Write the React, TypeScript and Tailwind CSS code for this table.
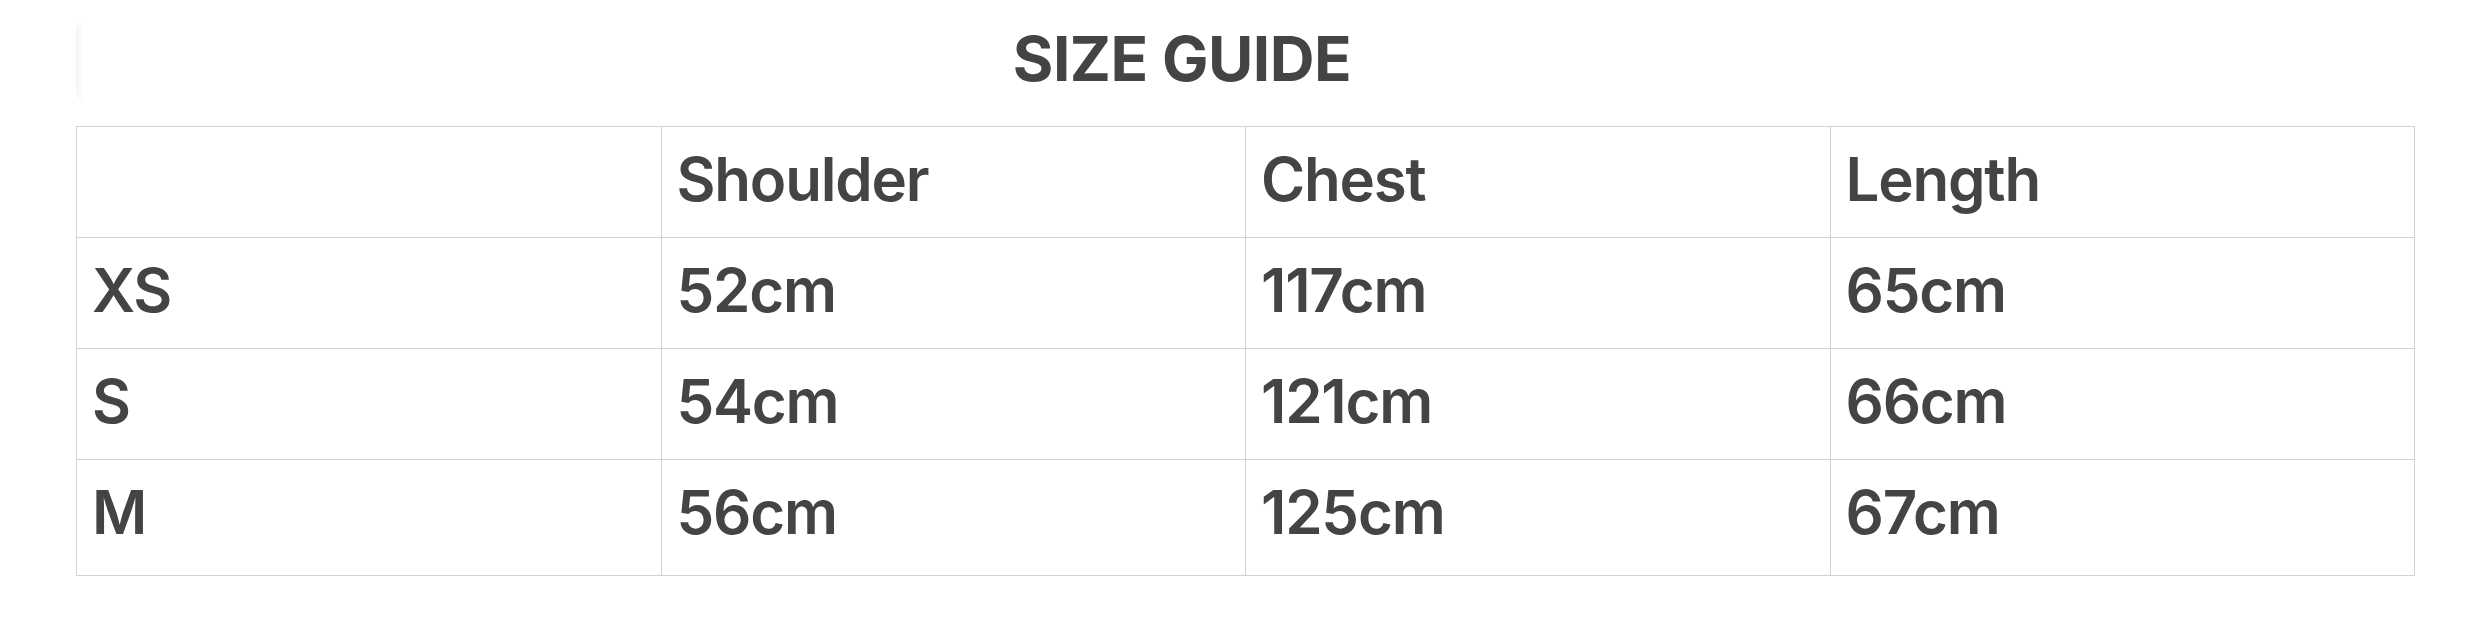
import React from "react";

const rows = [
  ["", "Shoulder", "Chest", "Length"],
  ["XS", "52cm", "117cm", "65cm"],
  ["S", "54cm", "121cm", "66cm"],
  ["M", "56cm", "125cm", "67cm"],
];

const App = () => {
  return (
    <div
      className="w-full h-[627px] bg-white text-[#444444] overflow-hidden"
      style={{ fontFamily: "Inter, 'Noto Sans', sans-serif" }}
    >
      <div className="relative flex justify-center pt-[28px] pr-[110px]">
        {/* faint card edge left behind in the capture */}
        <div className="absolute left-[76px] top-[22px] w-[8px] h-[78px] rounded-l-[10px] bg-gradient-to-r from-[#f4f4f4] to-white" />
        <h2 className="text-[62px] leading-none font-bold tracking-[-0.5px]">SIZE GUIDE</h2>
      </div>
      <div className="ml-[76px] mt-[36px] w-[2339px] grid grid-cols-4 border-t border-l border-[#d2d2d2]">
        {rows.map((row, r) =>
          row.map((cell, c) => (
            <div
              key={`${r}-${c}`}
              className={`flex items-center pl-[15px] pb-[6px] border-b border-r border-[#d2d2d2] text-[60px] leading-none font-semibold tracking-[-1.2px] ${
                r === rows.length - 1 ? "h-[116px] pb-[11px]" : "h-[111px]"
              }`}
            >
              {cell}
            </div>
          ))
        )}
      </div>
    </div>
  );
};

export default App;
